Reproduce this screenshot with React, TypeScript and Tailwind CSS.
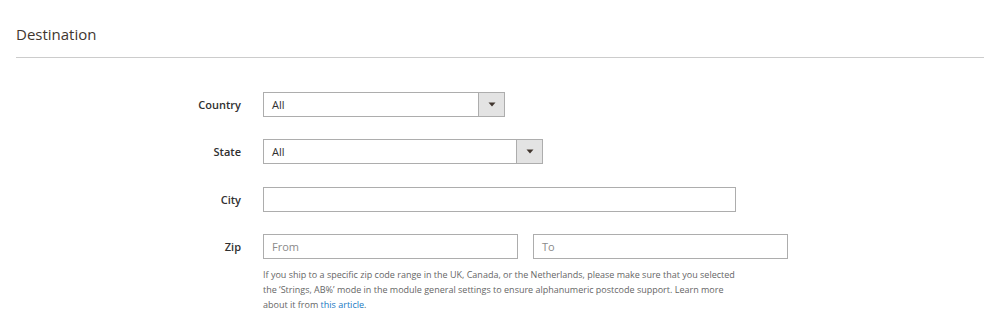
import { ReactNode } from 'react';

const font = { fontFamily: '"Open Sans", sans-serif' };

const Caret = () => (
  <svg width="8" height="5" viewBox="0 0 8 5">
    <path d="M0.5 0.5 H7.5 L4 4.5 Z" fill="#41362f" />
  </svg>
);

const Select = ({ width }: { width: string }) => (
  <div className={`flex h-[25px] ${width} border border-[#adadad] bg-white`}>
    <div className="flex-1 pl-2 text-[11px] leading-[23px] text-[#303030]">All</div>
    <div className="flex w-[26px] items-center justify-center border-l border-[#adadad] bg-[#e3e3e3]">
      <Caret />
    </div>
  </div>
);

const Input = ({ width, placeholder }: { width: string; placeholder?: string }) => (
  <div
    className={`h-[25px] ${width} border border-[#adadad] bg-white pl-2 text-[11px] leading-[23px] text-[#8a8a8a]`}
  >
    {placeholder}
  </div>
);

const Row = ({ label, children }: { label: string; children: ReactNode }) => (
  <div className="flex items-start">
    <div className="w-[225px] text-right text-[11px] font-semibold leading-[25px] text-[#303030]">
      {label}
    </div>
    <div className="ml-[22px]">{children}</div>
  </div>
);

export default function App() {
  return (
    <div className="h-[322px] w-[1004px] bg-white px-4 pt-[24px]" style={font}>
      <h2 className="text-[15px] leading-[21px] text-[#41362f]">Destination</h2>
      <div className="mt-[12px] h-px w-[968px] bg-[#cccccc]" />
      <div className="mt-[34px] flex flex-col gap-[22.4px]">
        <Row label="Country">
          <Select width="w-[242px]" />
        </Row>
        <Row label="State">
          <Select width="w-[280px]" />
        </Row>
        <Row label="City">
          <Input width="w-[473px]" />
        </Row>
        <Row label="Zip">
          <div className="flex gap-[15px]">
            <Input width="w-[255px]" placeholder="From" />
            <Input width="w-[255px]" placeholder="To" />
          </div>
          <p className="mt-[8px] w-[540px] text-[9px] leading-[15px] text-[#666666]">
            If you ship to a specific zip code range in the UK, Canada, or the Netherlands, please make sure
            that you selected
            <br />
            the ‘Strings, AB%’ mode in the module general settings to ensure alphanumeric postcode support.
            Learn more
            <br />
            about it from <span className="text-[#1979c3]">this article</span>.
          </p>
        </Row>
      </div>
    </div>
  );
}
